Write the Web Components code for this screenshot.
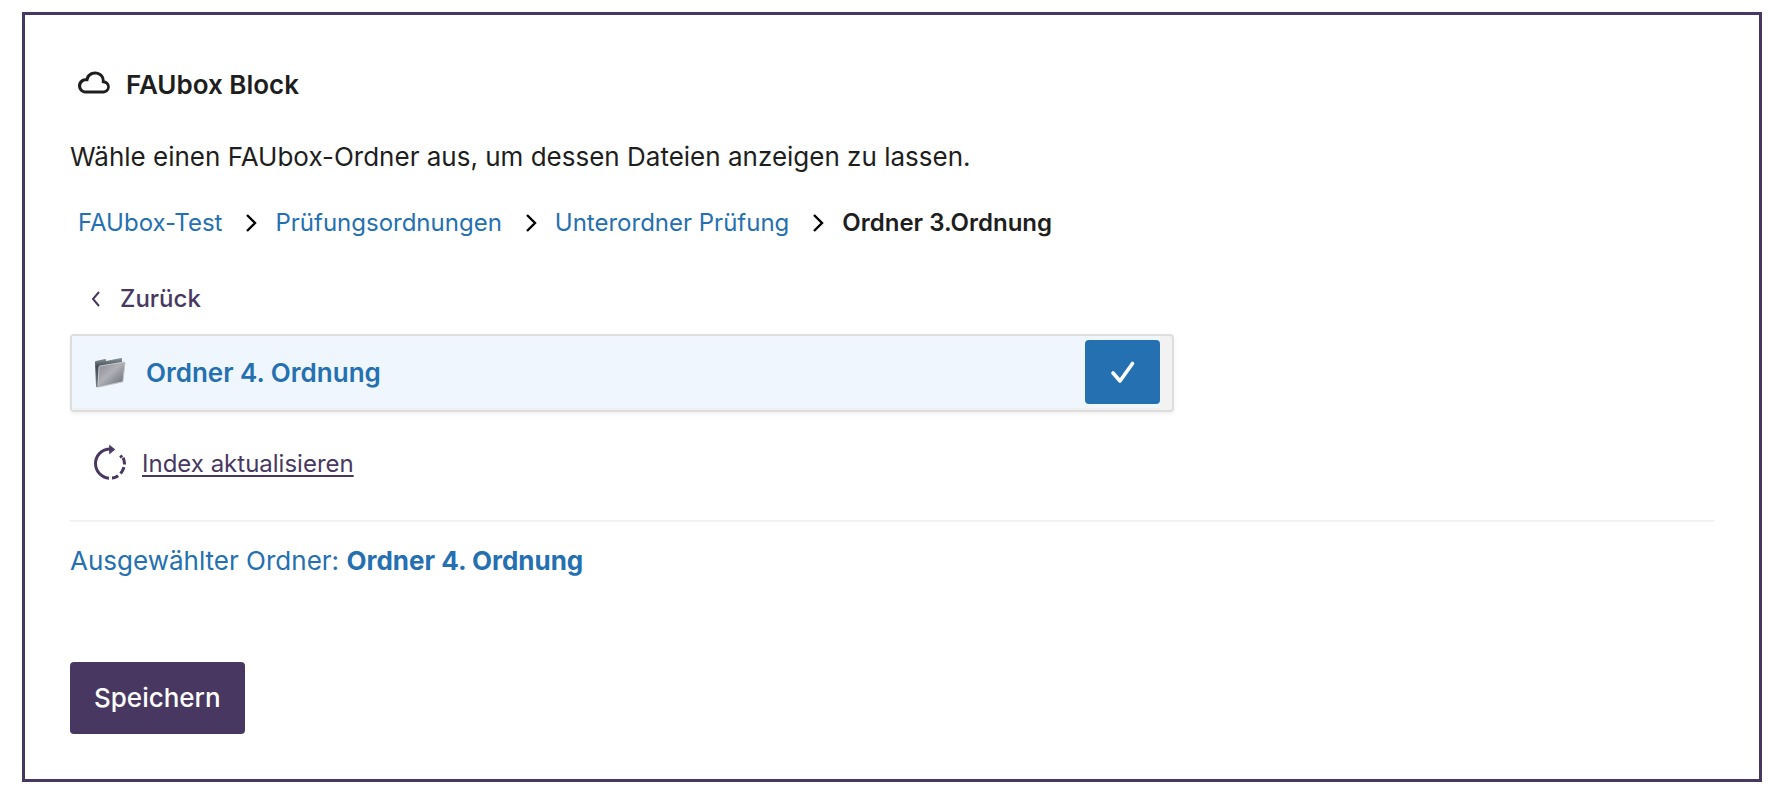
<!DOCTYPE html>
<html lang="de">
<head>
<meta charset="utf-8">
<meta name="viewport" content="width=device-width, initial-scale=1">
<title>FAUbox Block</title>
<style>
  body {
    margin: 0;
    padding: 12px 24px 16px 22px;
    background: #fff;
    color: #1e1e1e;
    font: 400 26px/32px Inter, "Liberation Sans", sans-serif;
    --brand: #483861;
    --link: #2470b0;
    --line: #ddd;
  }
</style>
</head>
<body>
<faubox-placeholder>
  <faubox-crumbs slot="crumbs">
    <faubox-crumb href="#test">FAUbox-Test</faubox-crumb>
    <faubox-crumb href="#pruefungsordnungen">Prüfungsordnungen</faubox-crumb>
    <faubox-crumb href="#unterordner">Unterordner Prüfung</faubox-crumb>
    <faubox-crumb>Ordner 3.Ordnung</faubox-crumb>
  </faubox-crumbs>
  <faubox-folder slot="folders">Ordner 4. Ordnung</faubox-folder>
  <span slot="selected">Ordner 4. Ordnung</span>
</faubox-placeholder>

<template id="placeholder">
  <style>
    :host { display: block; box-sizing: border-box; border: 3px solid var(--brand); padding: 46px 45px 45px; }
    header { display: flex; align-items: center; gap: 8px; height: 48px; }
    header svg { width: 48px; height: 48px; fill: currentColor; }
    h2 { margin: 0; font-size: 26px; font-weight: 600; }
    p { margin: 32px 0 34px; }
    button { font: inherit; border: 0; margin: 0; cursor: pointer; }
    .back { display: flex; align-items: center; height: 40px; margin: 40px 0 15px; padding: 0 12px;
      background: none; color: var(--brand); font-size: 24px; font-weight: 500; gap: 10px; }
    .back svg { width: 28px; height: 28px; }
    .refresh { display: flex; align-items: center; height: 48px; margin: 28px 0 32px; padding: 0 16px;
      background: none; color: var(--brand); font-size: 24px; gap: 8px; }
    .refresh svg { width: 48px; height: 48px; fill: currentColor; }
    .refresh span { text-decoration: underline; text-decoration-thickness: 2px; text-underline-offset: 3px; text-decoration-skip-ink: none; }
    hr { border: 0; border-top: 2px solid #f0f0f0; margin: 0; }
    .selected { margin: 23px 0 85px; color: var(--link); }
    .save { height: 72px; padding: 0 24px; border-radius: 4px; background: var(--brand); color: #fff; font-weight: 500; }
  </style>
  <header>
    <svg viewBox="0 0.4 24 24" aria-hidden="true"><path d="M17.3 10.1c0-2.5-2.1-4.4-4.8-4.4-2.2 0-4.1 1.4-4.6 3.3h-.2C5.7 9 4 10.7 4 12.800c0 2.100 1.700 3.800 3.700 3.800h9c1.800 0 3.200-1.500 3.200-3.300.1-1.600-1.100-2.900-2.600-3.200zm-.5 5.100h-9c-1.200 0-2.200-1.100-2.200-2.300s1-2.400 2.200-2.400h1.300l.3-1.100c.4-1.300 1.700-2.200 3.200-2.200 1.800 0 3.300 1.300 3.300 2.900v1.300l1.300.2c.8.1 1.400.9 1.400 1.800-.1 1-.9 1.800-1.800 1.800z"/></svg>
    <h2>FAUbox Block</h2>
  </header>
  <p>Wähle einen FAUbox-Ordner aus, um dessen Dateien anzeigen zu lassen.</p>
  <slot name="crumbs"></slot>
  <button class="back" type="button">
    <svg viewBox="0 0 28 28" fill="none" stroke="currentColor" stroke-width="2" aria-hidden="true"><path d="M17 7l-6 7 6 7"/></svg>
    <span>Zurück</span>
  </button>
  <slot name="folders"></slot>
  <button class="refresh" type="button">
    <svg viewBox="0 0.3 24 24" aria-hidden="true"><path d="M4 12.100C4 7.700 7.300 4.300 11.600 4V2.600L14.600 5l-3 2.500V5.500C8.100 5.800 5.500 8.600 5.500 12.100c0 3.500 2.600 6.300 6 6.600v1.500C7.300 19.900 4 16.400 4 12.100zm9 6.500v1.500c1.300-.2 2.500-.6 3.500-1.300l-.9-1.300c-.8.600-1.700.9-2.600 1.100zm3.700-2l1.100 1c.9-1 1.500-2.200 1.900-3.500l-1.500-.4c-.3 1.100-.8 2.100-1.500 2.900zm1.800-4.100H20c0-1.300-.3-2.600-.8-3.700l-1.300.7c.4.900.6 1.900.6 3zM16.600 8.400l1.200-.9.800 1.200-1.300.8z"/></svg>
    <span>Index aktualisieren</span>
  </button>
  <hr>
  <div class="selected">Ausgewählter Ordner: <b><slot name="selected"></slot></b></div>
  <button class="save" type="button">Speichern</button>
</template>

<template id="crumbs">
  <style>
    :host { display: flex; flex-wrap: wrap; align-items: center; padding-left: 8px; font-size: 24px; }
  </style>
  <slot></slot>
</template>

<template id="crumb">
  <style>
    :host { display: flex; align-items: center; }
    a { color: var(--link); text-decoration: none; }
    strong { font-weight: 600; }
    svg { width: 12px; height: 20px; margin: 0 18px 0 23px; }
  </style>
</template>

<template id="folder">
  <style>
    :host { display: flex; align-items: center; box-sizing: border-box; height: 78px; max-width: 1104px;
      border: 2px solid var(--line); border-radius: 4px; box-shadow: 0 2px 4px rgba(0,0,0,.06); background: #f2f2f2; padding-right: 12px; }
    button { border: 0; font: inherit; cursor: pointer; }
    .open { flex: 1; display: flex; align-items: center; align-self: stretch; gap: 20px; padding: 0 22px;
      background: linear-gradient(#eff6fd, #eff6fd) 0 0 / 100% 72px no-repeat #f0f0f0; color: var(--link); font-weight: 600; text-align: left; }
    .open svg { width: 32px; height: 32px; }
    .pick { display: flex; align-items: center; justify-content: center; width: 76px; align-self: stretch; padding: 4px 0 6px 1px;
      background: linear-gradient(#eff6fd, #eff6fd) 0 0 / 100% 72px no-repeat #f0f0f0; }
    .pick span { display: flex; align-items: center; justify-content: center; width: 100%; height: 64px;
      border-radius: 4px; background: var(--link); }
    .pick svg { width: 48px; height: 48px; }
  </style>
  <button class="open" type="button">
    <svg viewBox="0 0 32 32" aria-hidden="true">
      <defs>
        <linearGradient id="back" x1="0" y1="0" x2="0" y2="1"><stop offset="0" stop-color="#8d969c"/><stop offset=".3" stop-color="#3d4a53"/><stop offset="1" stop-color="#7a8087"/></linearGradient>
        <linearGradient id="front" x1="0" y1="0" x2="1" y2="1"><stop offset="0" stop-color="#85888f"/><stop offset=".45" stop-color="#b0b1b7"/><stop offset="1" stop-color="#62656e"/></linearGradient>
      </defs>
      <path fill="url(#back)" d="M1 5q0-1 1-1l9-2q1 0 1 1v1l15-3q1 0 1 1v4L5 30q-3 1-3-1z"/>
      <path fill="url(#front)" stroke="#c4c8cd" stroke-width="1" d="M5 10q0-1 1-1l24-4q1 0 1 1l-2 18q0 1-1 1L5 30q-1 0-1-1z"/>
    </svg>
    <slot></slot>
  </button>
  <button class="pick" type="button" aria-label="Auswählen">
    <span><svg viewBox="0 0 48 48" fill="none" stroke="#fff" stroke-width="3.6" stroke-linecap="round" stroke-linejoin="round" aria-hidden="true"><path d="M14 25l7 8 12.500-17.500"/></svg></span>
  </button>
</template>

<script>
  class TemplateElement extends HTMLElement {
    constructor() {
      super();
      this.attachShadow({ mode: "open" })
        .append(document.getElementById(this.constructor.template).content.cloneNode(true));
    }
  }
  customElements.define("faubox-placeholder", class extends TemplateElement { static template = "placeholder"; });
  customElements.define("faubox-crumbs", class extends TemplateElement {
    static template = "crumbs";
    connectedCallback() { this.setAttribute("role", "navigation"); }
  });
  customElements.define("faubox-folder", class extends TemplateElement { static template = "folder"; });
  customElements.define("faubox-crumb", class extends TemplateElement {
    static template = "crumb";
    connectedCallback() {
      const href = this.getAttribute("href");
      const item = document.createElement("div");
      item.style.display = "contents";
      item.innerHTML = href
        ? `<a href="${href}"><slot></slot></a><svg viewBox="0 0 12 20" fill="none" stroke="#000" stroke-width="2.4" aria-hidden="true"><path d="M2 2l8 8-8 8"/></svg>`
        : "<strong><slot></slot></strong>";
      this.shadowRoot.append(item);
    }
  });
</script>
</body>
</html>
